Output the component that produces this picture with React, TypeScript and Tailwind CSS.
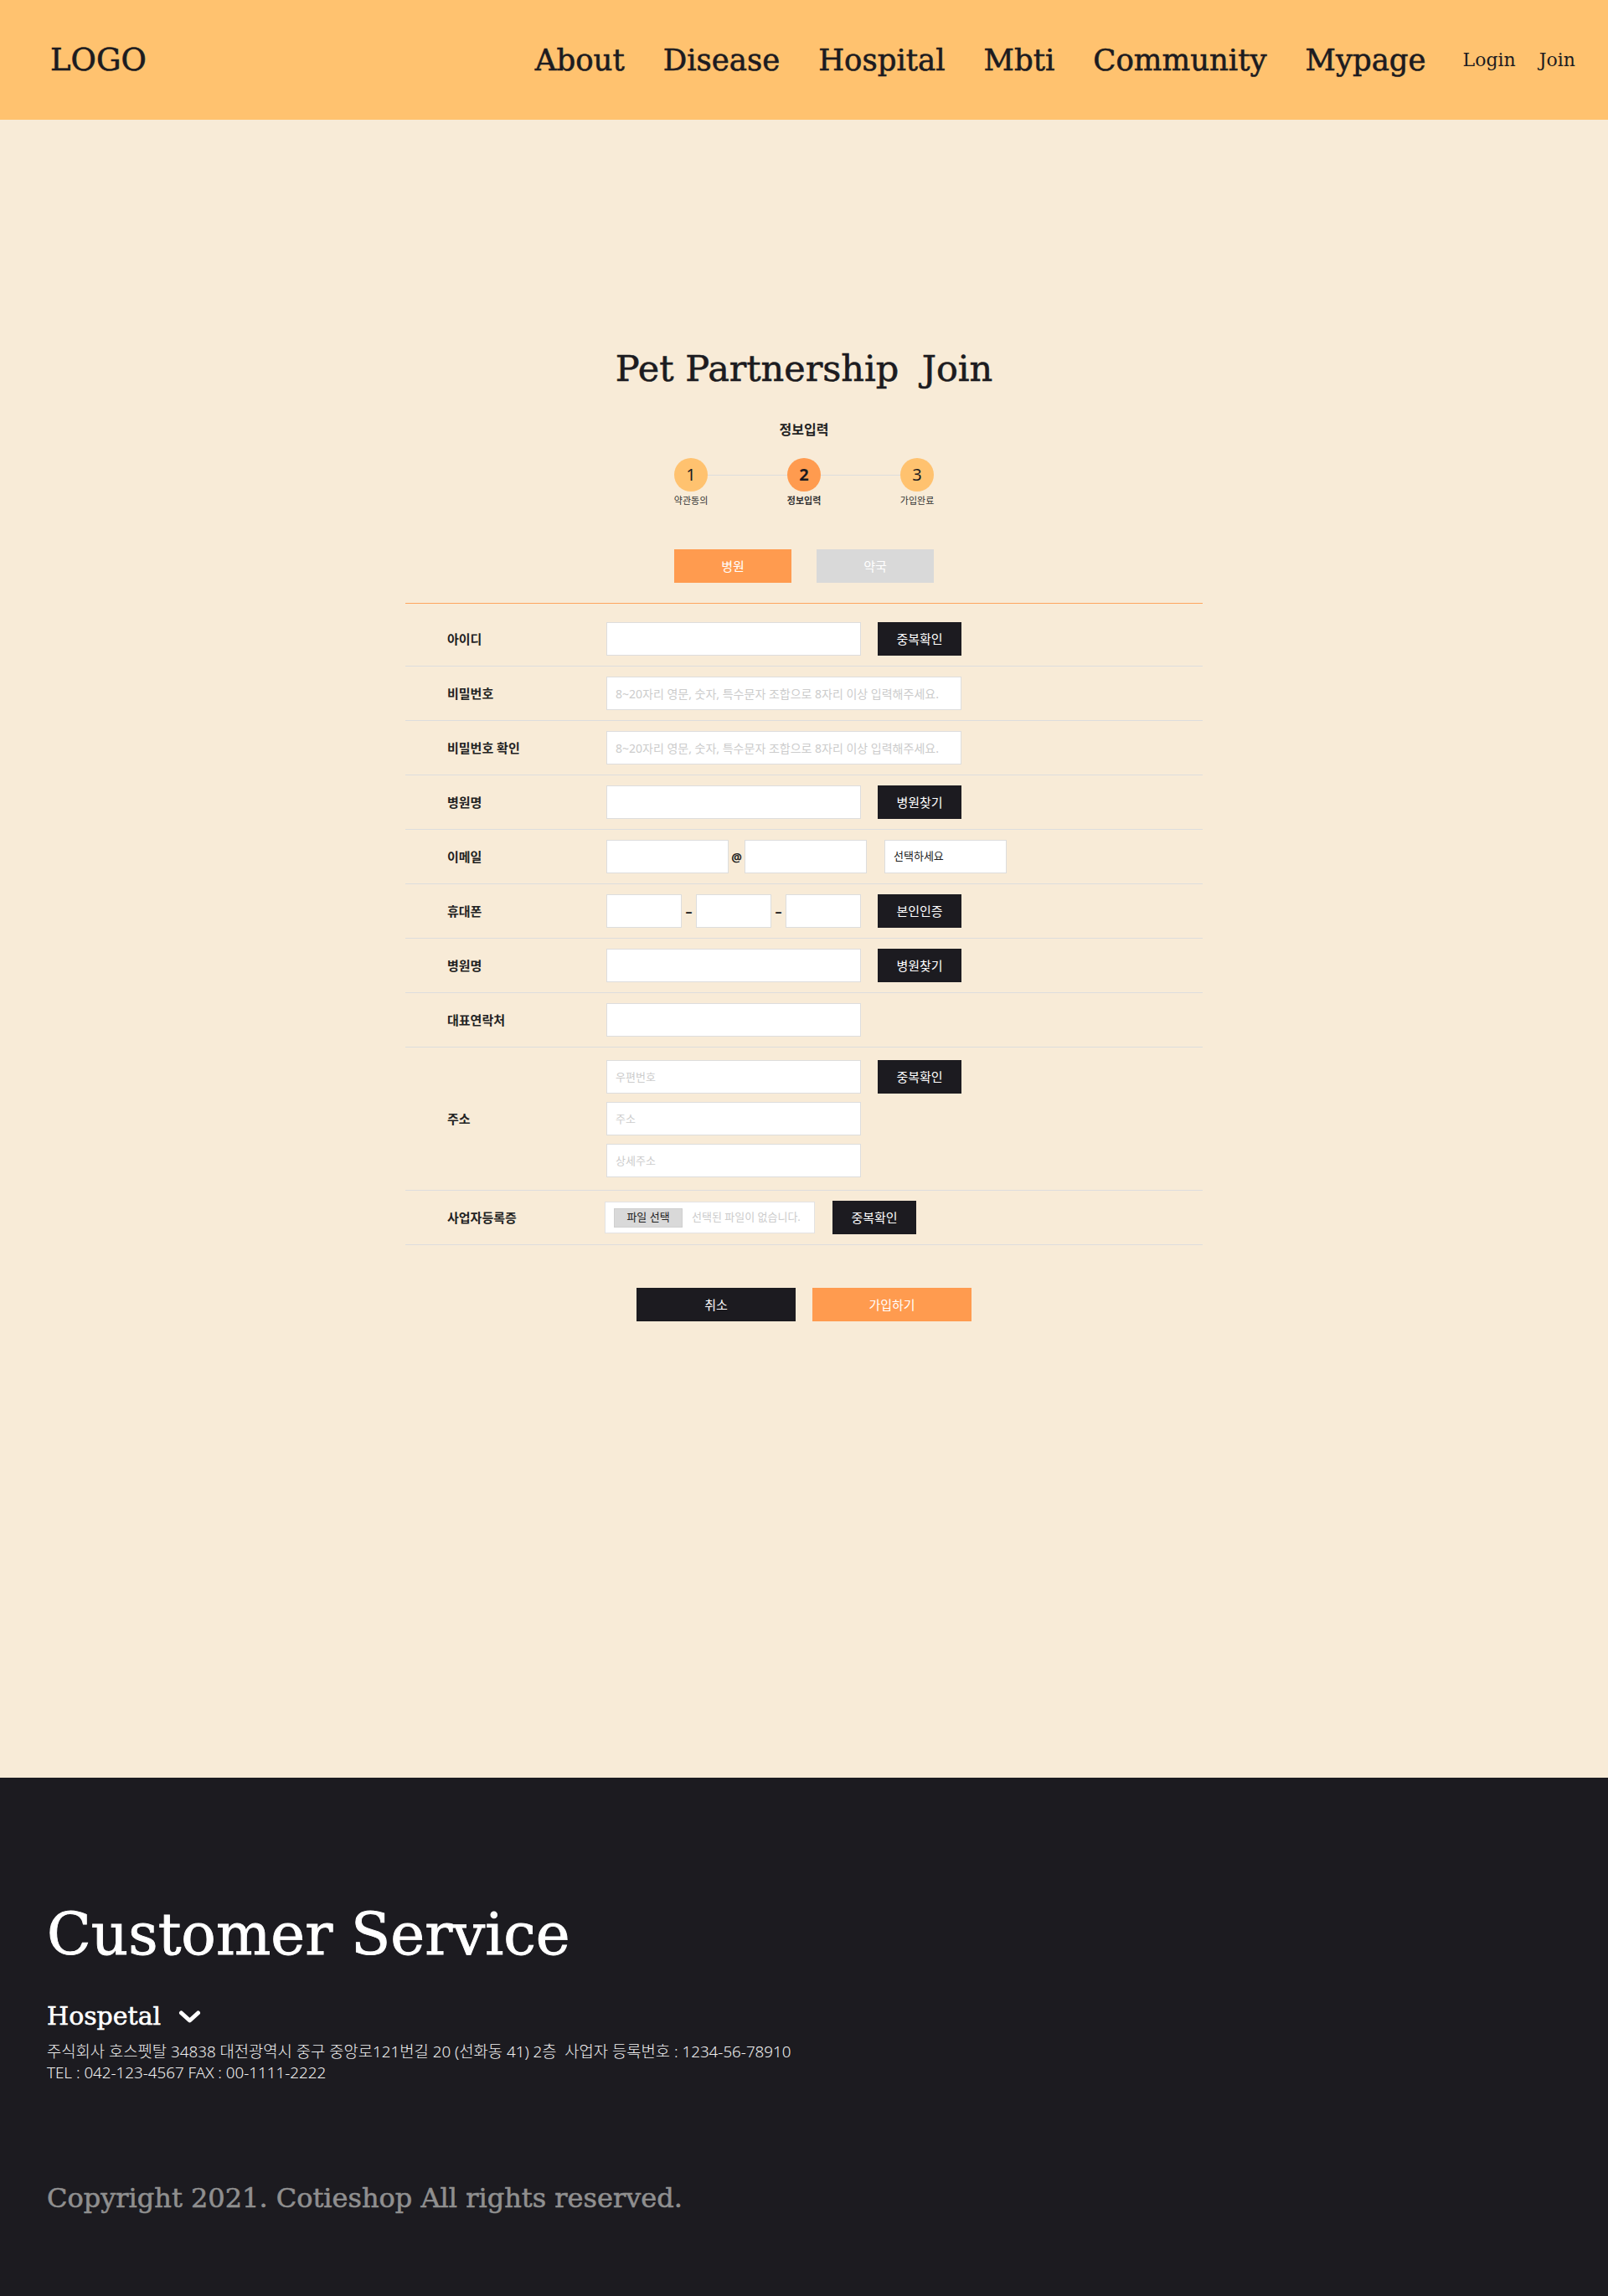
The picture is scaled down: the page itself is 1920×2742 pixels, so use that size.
const serif = "font-['DejaVu_Serif',serif]"
const sans = "font-['Noto_Sans','Noto_Sans_CJK_KR',sans-serif]"
const heavy = '[-webkit-text-stroke:0.6px_currentColor]'

const inputCls =
  'h-10 bg-white border border-[#dddddd] px-[10px] text-[13px] text-[#222] outline-none placeholder:text-[#cccccc]'

function DarkButton({ label }: { label: string }) {
  return (
    <button className="h-10 w-[100px] bg-[#1c1b20] text-white text-[15px]">{label}</button>
  )
}

function Row({ label, children, first }: { label: string; children: React.ReactNode; first?: boolean }) {
  return (
    <div className={`flex items-center border-b border-[#dddddd] py-3 ${first ? 'pt-[22px]' : ''}`}>
      <div className="w-[240px] pl-[50px] text-[15px] font-bold text-[#222]">{label}</div>
      <div className="flex items-center">{children}</div>
    </div>
  )
}

function Step({ n, label, active }: { n: number; label: string; active?: boolean }) {
  return (
    <div className="flex w-10 flex-col items-center">
      <div
        className={`flex h-10 w-10 items-center justify-center rounded-full text-[20px] text-[#1c1b20] ${
          active ? 'bg-[#ff9b4f] font-bold' : 'bg-[#ffc26f]'
        }`}
      >
        {n}
      </div>
      <div className={`mt-[3px] whitespace-nowrap text-[11px] leading-4 text-[#333] ${active ? 'font-bold' : ''}`}>
        {label}
      </div>
    </div>
  )
}

export default function App() {
  return (
    <div className={`${sans} min-h-screen bg-[#f8ebd7]`}>
      <header className="flex h-[143px] items-center justify-between bg-[#ffc26f] pl-[60px] pr-[39px] text-[#1c1b20]">
        <div className={`${serif} ${heavy} text-[37px] leading-none`}>LOGO</div>
        <nav className={`${serif} flex items-center`}>
          <ul className={`${heavy} flex items-center gap-[46px] text-[35.5px] leading-none`}>
            <li>About</li>
            <li>Disease</li>
            <li>Hospital</li>
            <li>Mbti</li>
            <li>Community</li>
            <li>Mypage</li>
          </ul>
          <ul className="ml-[44px] flex items-center gap-[28px] text-[22px] leading-none">
            <li>Login</li>
            <li>Join</li>
          </ul>
        </nav>
      </header>

      <main className="pt-[276px] pb-[545px]">
        <h1 className={`${serif} ${heavy} text-center text-[43px] leading-none text-[#1c1b20]`}>
          Pet Partnership&nbsp; Join
        </h1>
        <p className="mt-[39px] text-center text-[16px] font-bold leading-6 text-[#222]">정보입력</p>

        <div className="mt-[22px] flex justify-center">
          <Step n={1} label="약관동의" />
          <div className="mt-5 h-px w-[95px] bg-[#dddddd]" />
          <Step n={2} label="정보입력" active />
          <div className="mt-5 h-px w-[95px] bg-[#dddddd]" />
          <Step n={3} label="가입완료" />
        </div>

        <div className="mt-[50px] flex justify-center gap-[30px]">
          <button className="h-10 w-[140px] bg-[#ff9b4f] text-[15px] text-white">병원</button>
          <button className="h-10 w-[140px] bg-[#d9d9d9] text-[15px] text-white">약국</button>
        </div>

        <form className="mx-auto mt-6 w-[952px] border-t border-[#ffa55e]">
          <Row label="아이디" first>
            <input className={`${inputCls} w-[304px]`} />
            <div className="ml-5">
              <DarkButton label="중복확인" />
            </div>
          </Row>
          <Row label="비밀번호">
            <input
              type="password"
              className={`${inputCls} w-[424px] text-[14px]`}
              placeholder="8~20자리 영문, 숫자, 특수문자 조합으로 8자리 이상 입력해주세요."
            />
          </Row>
          <Row label="비밀번호 확인">
            <input
              type="password"
              className={`${inputCls} w-[424px] text-[14px]`}
              placeholder="8~20자리 영문, 숫자, 특수문자 조합으로 8자리 이상 입력해주세요."
            />
          </Row>
          <Row label="병원명">
            <input className={`${inputCls} w-[304px]`} />
            <div className="ml-5">
              <DarkButton label="병원찾기" />
            </div>
          </Row>
          <Row label="이메일">
            <input className={`${inputCls} w-[146px]`} />
            <span className="w-[19px] text-center text-[14px] font-bold text-[#222]">@</span>
            <input className={`${inputCls} w-[146px]`} />
            <div className="ml-[21px] flex h-10 w-[146px] items-center border border-[#dddddd] bg-white px-[10px] text-[13px] text-[#222]">
              선택하세요
            </div>
          </Row>
          <Row label="휴대폰">
            <input className={`${inputCls} w-[90px]`} />
            <span className="w-[17px] text-center text-[16px] font-bold text-[#1c1b20]">–</span>
            <input className={`${inputCls} w-[90px]`} />
            <span className="w-[17px] text-center text-[16px] font-bold text-[#1c1b20]">–</span>
            <input className={`${inputCls} w-[90px]`} />
            <div className="ml-5">
              <DarkButton label="본인인증" />
            </div>
          </Row>
          <Row label="병원명">
            <input className={`${inputCls} w-[304px]`} />
            <div className="ml-5">
              <DarkButton label="병원찾기" />
            </div>
          </Row>
          <Row label="대표연락처">
            <input className={`${inputCls} w-[304px]`} />
          </Row>
          <div className="flex items-center border-b border-[#dddddd] py-[15px]">
            <div className="w-[240px] pl-[50px] text-[15px] font-bold text-[#222]">주소</div>
            <div className="flex flex-col gap-[10px]">
              <div className="flex items-center">
                <input className={`${inputCls} w-[304px]`} placeholder="우편번호" />
                <div className="ml-5">
                  <DarkButton label="중복확인" />
                </div>
              </div>
              <input className={`${inputCls} w-[304px]`} placeholder="주소" />
              <input className={`${inputCls} w-[304px]`} placeholder="상세주소" />
            </div>
          </div>
          <Row label="사업자등록증">
            <div className="-ml-[2px] flex h-[38px] w-[251px] items-center border border-[#e2e2e2] bg-white px-[10px]">
              <span className="flex h-[23px] w-[82px] items-center justify-center border border-[#cfcfcf] bg-[#d9d9d9] text-[13px] text-[#222]">
                파일 선택
              </span>
              <span className="ml-[11px] text-[13px] text-[#cccccc]">선택된 파일이 없습니다.</span>
            </div>
            <div className="ml-[21px]">
              <DarkButton label="중복확인" />
            </div>
          </Row>
        </form>

        <div className="mt-[51px] flex justify-center gap-5">
          <button className="h-10 w-[190px] bg-[#1c1b20] text-[15px] text-white">취소</button>
          <button className="h-10 w-[190px] bg-[#ff9b4f] text-[15px] text-white">가입하기</button>
        </div>
      </main>

      <footer className="bg-[#1c1b20] pl-[56px] pt-[153px] pb-[101px] text-white">
        <h2 className={`${serif} [-webkit-text-stroke:0.9px_currentColor] text-[69px] leading-none`}>
          Customer Service
        </h2>
        <div className={`${serif} ${heavy} mt-[48px] flex items-center text-[30px] leading-none`}>
          <span>Hospetal</span>
          <svg className="ml-[21px]" width="27" height="15" viewBox="0 0 27 15" fill="none">
            <polyline
              points="3.5,3 13.5,12 23.5,3"
              stroke="white"
              strokeWidth="5"
              strokeLinecap="round"
              strokeLinejoin="round"
            />
          </svg>
        </div>
        <div className="mt-[15px] text-[18.8px] font-light leading-[25px] text-[#f0f0f0]">
          <p>주식회사 호스펫탈 34838 대전광역시 중구 중앙로121번길 20 (선화동 41) 2층&nbsp; 사업자 등록번호 : 1234-56-78910</p>
          <p>TEL : 042-123-4567 FAX : 00-1111-2222</p>
        </div>
        <p className={`${serif} ${heavy} mt-[121px] text-[32px] leading-none text-[#8f8f8f]`}>
          Copyright 2021. Cotieshop All rights reserved.
        </p>
      </footer>
    </div>
  )
}
